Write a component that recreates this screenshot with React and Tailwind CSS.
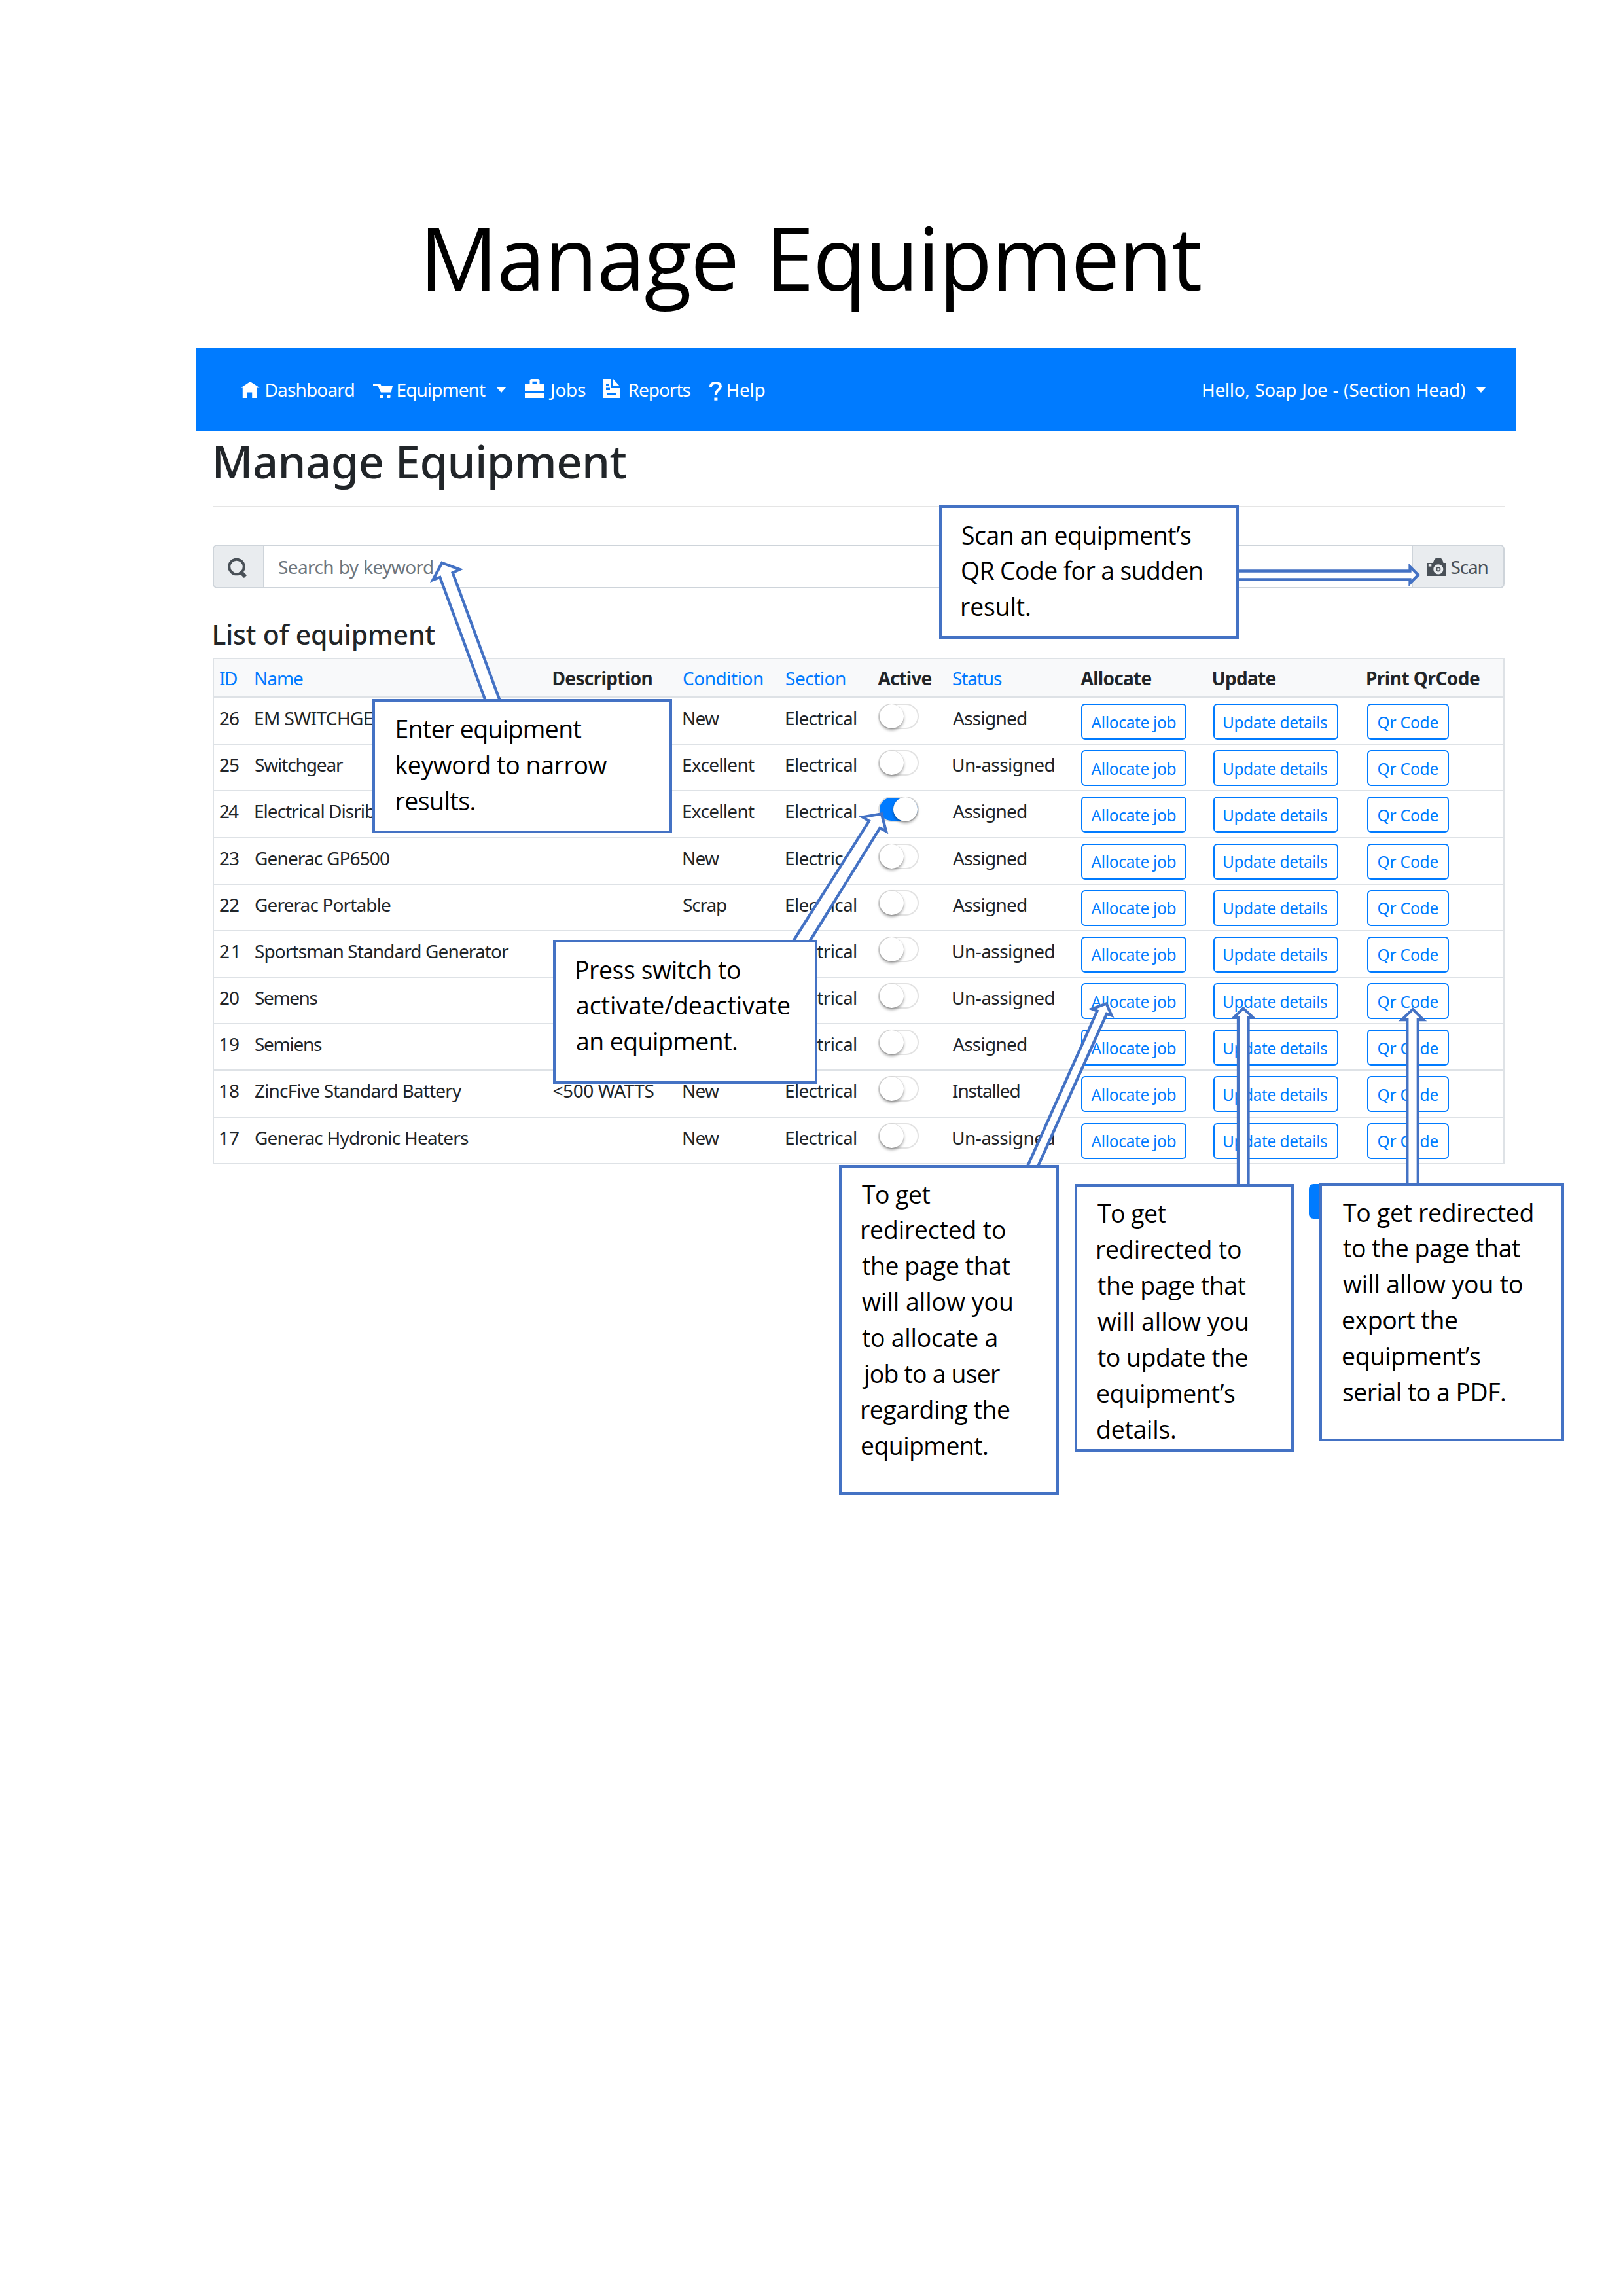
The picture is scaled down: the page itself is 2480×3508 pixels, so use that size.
import React, { useLayoutEffect, useRef, useState } from "react";

/* One line of text whose drawn width is set in pixels through letter spacing. */
function Fit({ w, children, wordGap = 0, className = "" }) {
  const ref = useRef(null);
  const [style, setStyle] = useState({});
  useLayoutEffect(() => {
    const cs = getComputedStyle(ref.current);
    const ctx = document.createElement("canvas").getContext("2d");
    ctx.font = `${cs.fontWeight} ${cs.fontSize} ${cs.fontFamily}`;
    const m = ctx.measureText(children);
    const gaps = children.split(" ").length - 1;
    const ink = m.actualBoundingBoxRight + m.actualBoundingBoxLeft + gaps * wordGap;
    const spacing = (w - ink) / Math.max(1, children.length - 1);
    setStyle({
      letterSpacing: `${spacing}px`,
      wordSpacing: `${wordGap}px`,
      textIndent: `${m.actualBoundingBoxLeft}px`,
      width: `${w}px`,
    });
  }, [w, children, wordGap]);
  return (
    <span ref={ref} className={`block shrink-0 whitespace-pre ${className}`} style={style}>
      {children}
    </span>
  );
}

const HomeIcon = () => (
  <svg className="h-[25px] w-[29px] shrink-0" viewBox="0 0 29 25" fill="currentColor">
    <path d="M14.3 0 L0 9.5 H2.8 V25 H10 V16.5 H17.2 V25 H24.6 V9.5 H28.6 L24 6.2 Z" />
  </svg>
);
const CartIcon = () => (
  <svg className="h-[22px] w-[30px] shrink-0" viewBox="0 0 30 22" fill="currentColor">
    <path d="M0 0 H11 L13 4 H30 L27.5 13.5 H12 L7.5 4 H0 Z" />
    <rect x="10" y="17.5" width="5.5" height="4.5" rx="1" />
    <rect x="21" y="17.5" width="5.5" height="4.5" rx="1" />
  </svg>
);
const BriefcaseIcon = () => (
  <svg className="h-[29px] w-[30px] shrink-0" viewBox="0 0 30 29" fill="currentColor">
    <path fillRule="evenodd" d="M9 0 H20.5 L22.5 2 V7 H30 V18 H0 V7 H7.5 V2 Z M11.5 3.8 V7 H18.5 V3.8 Z" />
    <rect y="21" width="30" height="8" />
  </svg>
);
const ReportIcon = () => (
  <svg className="h-[29px] w-[27px] shrink-0" viewBox="0 0 27 29" fill="currentColor">
    <path
      fillRule="evenodd"
      d="M0 0 H12 V14 H25.5 V29 H0 Z M4 7 V11 H8 V7 Z M4 13.5 V17 H10 V13.5 Z M6 21.5 V25 H19 V21.5 Z"
    />
    <path d="M15 0 L25 11 H15 Z" />
  </svg>
);
const QuestionIcon = () => (
  <svg className="h-[29px] w-[20px] shrink-0" viewBox="0 0 20 29">
    <path d="M2 8 C2 3.5 5 2 9.8 2 C14.5 2 17 4 17 7.5 C17 12.5 9.8 12.5 9.8 20.5" fill="none" stroke="currentColor" strokeWidth="4" />
    <rect x="7.4" y="24.5" width="5" height="4.2" fill="currentColor" />
  </svg>
);
const SearchIcon = () => (
  <svg className="h-[30px] w-[30px] shrink-0" viewBox="0 0 30 30" fill="none" stroke="#495057">
    <circle cx="13.5" cy="13" r="11.3" strokeWidth="4" />
    <path d="M20 21 L27 28" strokeWidth="6" />
  </svg>
);
const CameraIcon = () => (
  <svg className="h-[28px] w-[28px] shrink-0" viewBox="0 0 28 28">
    <path d="M0 8 H9 C10 3 12 0 17 0 C22 0 23.5 3 24.5 8 H28 V28 H0 Z" fill="#495057" />
    <rect x="1.8" y="10" width="4.5" height="3.6" fill="#e9ecef" />
    <circle cx="16.8" cy="17.8" r="5.6" fill="#495057" stroke="#e9ecef" strokeWidth="4" />
    <rect x="15.4" y="16.3" width="3" height="3" fill="#e9ecef" />
  </svg>
);
const Caret = ({ className }) => (
  <svg className={`h-[9px] w-[16px] shrink-0 ${className}`} viewBox="0 0 16 9" fill="currentColor">
    <path d="M0 0 H16 L8 9 Z" />
  </svg>
);

const GRID =
  "grid grid-cols-[54px_455.5px_198.5px_157px_140.5px_114.5px_195.5px_202px_235.5px_1fr] pl-[9px]";

const headers = [
  ["ID", 26, true],
  ["Name", 73, true],
  ["Description", 151, false],
  ["Condition", 122, true],
  ["Section", 91, true],
  ["Active", 82, false],
  ["Status", 75, true],
  ["Allocate", 108, false],
  ["Update", 96, false],
  ["Print QrCode", 172, false],
];

const rows = [
  ["26", "EM SWITCHGEAR", 214, "", "New", false, "Assigned"],
  ["25", "Switchgear", 135, "", "Excellent", false, "Un-assigned"],
  ["24", "Electrical Disribution", 247, "", "Excellent", true, "Assigned"],
  ["23", "Generac GP6500", 205, "", "New", false, "Assigned"],
  ["22", "Gererac Portable", 207, "", "Scrap", false, "Assigned"],
  ["21", "Sportsman Standard Generator", 388, "", "New", false, "Un-assigned"],
  ["20", "Semens", 95.5, "", "New", false, "Un-assigned"],
  ["19", "Semiens", 102, "", "New", false, "Assigned"],
  ["18", "ZincFive Standard Battery", 316, "<500 WATTS", "New", false, "Installed"],
  ["17", "Generac Hydronic Heaters", 326, "", "New", false, "Un-assigned"],
];

const widths = { New: 55, Excellent: 109, Scrap: 66, Assigned: 112, "Un-assigned": 154.5, Installed: 101.5 };

function Switch({ on }) {
  return (
    <span
      className={`mt-[8px] flex h-[39px] w-[62px] rounded-full border-2 ${
        on ? "justify-end border-[#dfdfdf] bg-[#007bff]" : "border-[#e2e2e2] bg-white"
      }`}
    >
      <span className="-my-[1px] h-[37px] w-[37px] rounded-full bg-white shadow-[0_3px_4px_rgba(0,0,0,0.35),0_0_1px_rgba(0,0,0,0.3)]" />
    </span>
  );
}

function Button({ label, w, className }) {
  return (
    <button
      className={`mt-[8px] flex h-[55px] items-center justify-center rounded-[6px] border-2 border-[#007bff] pt-[2px] text-[24.5px] leading-[34px] text-[#007bff] ${className}`}
    >
      <Fit w={w}>{label}</Fit>
    </button>
  );
}

const arrows = [
  "M742 1071 L672.3 882 L661.5 886 L675.3 860 L702.5 870 L691.7 875 L764 1071",
  "M1891 872.5 H2154.5 V866 L2167 878.5 L2154.5 891 V885.5 H1891",
  "M1212 1438 L1328 1254.5 L1318 1248.5 L1347 1243.5 L1354 1270 L1344.6 1265 L1237.3 1438",
  "M1570 1782 L1676.5 1544.6 L1668.5 1541.5 L1690.5 1533.5 L1698.5 1551.5 L1691 1549 L1586 1782",
  "M1892 1812 V1554.5 H1885.5 L1899.7 1540.5 L1914.5 1554.5 H1907.5 V1812",
  "M2150.3 1812 V1558 H2142 L2158.8 1542 L2175 1558 H2166.8 V1812",
];

const callouts = [
  {
    box: "left-[1435px] top-[772px] w-[458px] h-[204px] pl-[31px] pt-[14.5px]",
    lines: [["Scan an equipment’s", 350], ["QR Code for a sudden", 366], ["result.", 104]],
  },
  {
    box: "left-[569px] top-[1068px] w-[458px] h-[205px] pl-[33.5px] pt-[15px]",
    lines: [["Enter equipment", 282], ["keyword to narrow", 321], ["results.", 119]],
  },
  {
    box: "left-[845px] top-[1436px] w-[404px] h-[220px] pl-[32px] pt-[14.5px]",
    lines: [["Press switch to", 250], ["activate/deactivate", 326], ["an equipment.", 245]],
  },
  {
    box: "left-[1282px] top-[1780px] w-[336px] h-[504px] pl-[31px] pt-[13.5px]",
    lines: [
      ["To get", 104.5],
      ["redirected to", 219],
      ["the page that", 226.5],
      ["will allow you", 229],
      ["to allocate a", 205.5],
      ["job to a user", 211],
      ["regarding the", 226],
      ["equipment.", 192],
    ],
  },
  {
    box: "left-[1642px] top-[1809px] w-[335px] h-[409px] pl-[31px] pt-[14px]",
    lines: [
      ["To get", 104.5],
      ["redirected to", 219],
      ["the page that", 226.5],
      ["will allow you", 229],
      ["to update the", 229.5],
      ["equipment’s", 210],
      ["details.", 119],
    ],
  },
  {
    box: "left-[2016px] top-[1808px] w-[374px] h-[394px] pl-[32px] pt-[13.5px]",
    lines: [
      ["To get redirected", 289.5],
      ["to the page that", 271],
      ["will allow you to", 274],
      ["export the", 175],
      ["equipment’s", 210],
      ["serial to a PDF.", 248],
    ],
  },
];

export default function App() {
  return (
    <div className="relative h-[3508px] w-[2480px] overflow-hidden bg-white font-['Noto_Sans',sans-serif] text-[#212529]">
      <h1 className="mt-[313px] mb-[58px] ml-[653px] font-['Open_Sans',sans-serif] text-[133px] leading-[160px] text-black">
        <Fit w={1182} wordGap={8}>Manage Equipment</Fit>
      </h1>

      <nav className="ml-[300px] flex h-[128px] w-[2017px] items-center bg-[#007bff] pl-[68px] pr-[46px] text-[28px] leading-[42px] text-white">
        <HomeIcon />
        <Fit w={134} className="ml-[9.5px]">Dashboard</Fit>
        <span className="ml-[29px] mt-[4px]"><CartIcon /></span>
        <Fit w={134.5} className="ml-[8px]">Equipment</Fit>
        <Caret className="ml-[16px]" />
        <span className="ml-[28px] -mt-[3px]"><BriefcaseIcon /></span>
        <Fit w={57} className="ml-[6px]">Jobs</Fit>
        <span className="ml-[27px] -mt-[3px]"><ReportIcon /></span>
        <Fit w={94} className="ml-[12.5px]">Reports</Fit>
        <span className="ml-[28px] mt-[4px]"><QuestionIcon /></span>
        <Fit w={57} className="ml-[8px]">Help</Fit>
        <Fit w={401} wordGap={1} className="ml-auto">Hello, Soap Joe - (Section Head)</Fit>
        <Caret className="ml-[16px]" />
      </nav>

      <main className="ml-[325px] w-[1974px]">
        <h2 className="mt-[5.5px] pl-[4.5px] text-[68.6px] font-[550] leading-[80px]">
          <Fit w={627}>Manage Equipment</Fit>
        </h2>
        <div className="mt-[28.5px] h-[2px] bg-[#e5e5e5]" />

        <div className="mt-[57px] flex h-[67px] rounded-[7px] border-2 border-[#ced4da] text-[28px] leading-[42px]">
          <div className="flex w-[77px] items-center justify-center rounded-l-[5px] border-r-2 border-[#ced4da] bg-[#e9ecef] pt-[4px] pr-[3px]">
            <SearchIcon />
          </div>
          <div className="flex flex-1 items-center pl-[22px] text-[#6c757d]">
            <Fit w={235} wordGap={1}>Search by keyword</Fit>
          </div>
          <div className="flex w-[140px] items-center rounded-r-[5px] border-l-2 border-[#ced4da] bg-[#e9ecef] pl-[22px] text-[#495057]">
            <CameraIcon />
            <Fit w={56} className="ml-[8.5px]">Scan</Fit>
          </div>
        </div>

        <h3 className="mt-[44.5px] pl-[1.5px] text-[41px] font-[550] leading-[50px]">
          <Fit w={338}>List of equipment</Fit>
        </h3>

        <div className="mt-[11.5px] border-x-2 border-t-2 border-[#dee2e6] text-[28px] leading-[42px]">
          <div className={`${GRID} h-[60px] items-center border-b-[3px] border-[#dee2e6] bg-[#f8f9fa] pt-[1px]`}>
            {headers.map(([label, w, link]) => (
              <Fit key={label} w={w} className={link ? "text-[#007bff]" : "font-bold"}>
                {label}
              </Fit>
            ))}
          </div>
          {rows.map(([id, name, nameW, desc, cond, on, status]) => (
            <div key={id} className={`${GRID} h-[71.18px] items-start border-b-2 border-[#dee2e6]`}>
              <Fit w={id === "21" ? 26.5 : 29} className="mt-[9px]">{id}</Fit>
              <Fit w={nameW} className="mt-[9px]">{name}</Fit>
              {desc ? <Fit w={154} className="mt-[9px]">{desc}</Fit> : <span />}
              <Fit w={widths[cond]} className="mt-[9px]">{cond}</Fit>
              <Fit w={107} className="mt-[9px]">Electrical</Fit>
              <Switch on={on} />
              <Fit w={widths[status]} className="mt-[9px]">{status}</Fit>
              <Button label="Allocate job" w={129} className="w-[161px]" />
              <Button label="Update details" w={158} className="w-[191px]" />
              <Button label="Qr Code" w={92} className="w-[125px]" />
            </div>
          ))}
        </div>

        <div className="ml-[1675px] mt-[30px] h-[53px] w-[120px] rounded-[7px] bg-[#007bff]" />
      </main>

      <svg className="absolute left-0 top-0 h-[3508px] w-[2480px]" viewBox="0 0 2480 3508">
        {arrows.map((d) => (
          <path key={d} d={d} fill="#fff" stroke="#4472c4" strokeWidth="4.3" strokeMiterlimit="10" />
        ))}
      </svg>

      {callouts.map(({ box, lines }) => (
        <div
          key={box}
          className={`absolute border-4 border-[#4472c4] bg-white font-['Open_Sans',sans-serif] text-[37.4px] leading-[54.95px] text-black ${box}`}
        >
          {lines.map(([text, w]) => (
            <Fit key={text} w={w}>{text}</Fit>
          ))}
        </div>
      ))}
    </div>
  );
}
